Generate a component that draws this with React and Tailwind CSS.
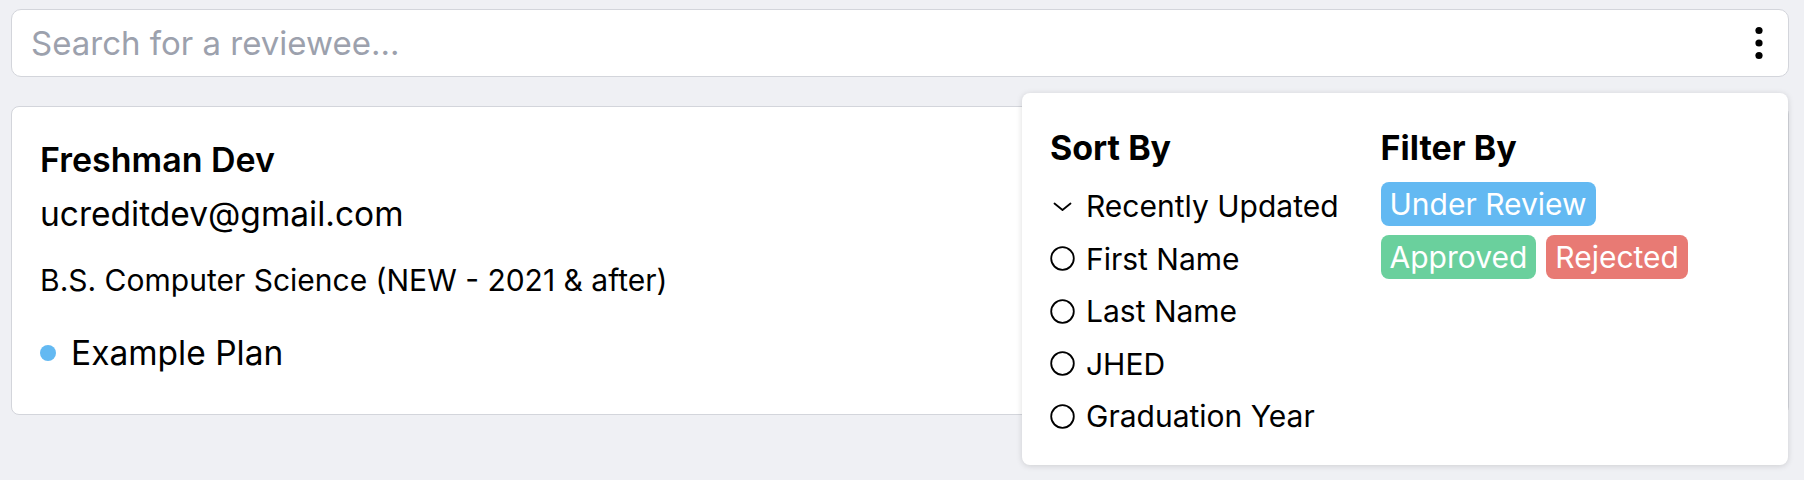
import React from "react";

function Radio() {
  return (
    <svg width="25" height="25" viewBox="0 0 25 25" className="shrink-0">
      <circle cx="12.5" cy="12.5" r="11.3" fill="none" stroke="#000" strokeWidth="1.8" />
    </svg>
  );
}

function Chevron() {
  return (
    <svg width="25" height="25" viewBox="0 0 25 25" className="shrink-0">
      <path d="M4.5 9.5 L12.5 16 L20.5 9.5" fill="none" stroke="#000" strokeWidth="1.8" strokeLinecap="round" strokeLinejoin="round" />
    </svg>
  );
}

function Dots() {
  return (
    <svg width="10" height="34" viewBox="0 0 10 34">
      <circle cx="5" cy="4.5" r="3.6" fill="#000" />
      <circle cx="5" cy="17" r="3.6" fill="#000" />
      <circle cx="5" cy="29.5" r="3.6" fill="#000" />
    </svg>
  );
}

export default function App() {
  const sorts = ["First Name", "Last Name", "JHED", "Graduation Year"];
  return (
    <div className="relative min-h-[480px] bg-[#eff0f4] pl-[11px] pr-[15px] pt-[9px] font-['Inter',sans-serif] text-black">
      <div className="flex h-[68px] items-center justify-between rounded-[10px] border border-[#d3d5db] bg-white pl-[19px] pr-[24px]">
        <span className="text-[33px] leading-[40px] text-[#9ca1ad]">Search for a reviewee...</span>
        <Dots />
      </div>

      <div className="mt-[29px] flex h-[309px] flex-col rounded-[8px] border border-[#d3d5db] bg-white pl-[28px] pt-[33px]">
        <div className="text-[34px] font-semibold leading-[40px]">Freshman Dev</div>
        <div className="mt-[14px] text-[33.5px] leading-[40px]">ucreditdev@gmail.com</div>
        <div className="mt-[28px] text-[30px] leading-[36px]">B.S. Computer Science (NEW - 2021 &amp; after)</div>
        <div className="mt-[35px] flex items-center gap-[15px]">
          <span className="h-[16px] w-[16px] rounded-full bg-[#63b9f2]" />
          <span className="text-[33.5px] leading-[40px]">Example Plan</span>
        </div>
      </div>

      <div className="absolute left-[1022px] top-[93px] flex h-[372px] w-[766px] gap-[42px] rounded-[8px] bg-white pl-[28px] pt-[35px] shadow-[0_1px_6px_rgba(0,0,0,0.14)]">
        <div className="flex flex-col">
          <div className="text-[34px] font-bold leading-[40px]">Sort By</div>
          <div className="mt-[12px] flex flex-col">
            <div className="flex h-[52.5px] items-center gap-[11px]">
              <Chevron />
              <span className="text-[30px] leading-[36px]">Recently Updated</span>
            </div>
            {sorts.map((s) => (
              <div key={s} className="flex h-[52.5px] items-center gap-[11px]">
                <Radio />
                <span className="text-[30px] leading-[36px]">{s}</span>
              </div>
            ))}
          </div>
        </div>
        <div className="flex flex-col">
          <div className="text-[34px] font-bold leading-[40px]">Filter By</div>
          <div className="mt-[14px] flex flex-col items-start gap-[9px]">
            <span className="flex h-[44px] items-center rounded-[8px] bg-[#63b9f2] px-[9px] text-[30px] text-white">Under Review</span>
            <div className="flex gap-[10px]">
              <span className="flex h-[44px] items-center rounded-[8px] bg-[#6ad09d] px-[9px] text-[30px] text-white">Approved</span>
              <span className="flex h-[44px] items-center rounded-[8px] bg-[#e87a74] px-[9px] text-[30px] text-white">Rejected</span>
            </div>
          </div>
        </div>
      </div>
    </div>
  );
}
